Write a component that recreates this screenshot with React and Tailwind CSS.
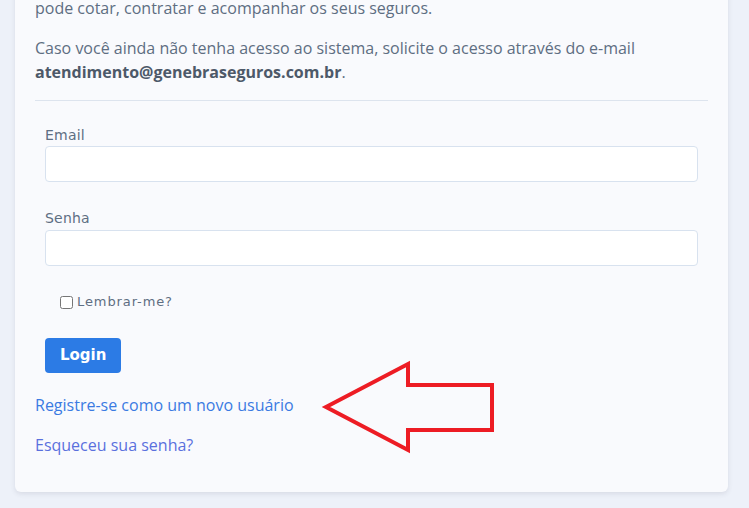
export default function App() {
  return (
    <div className="relative h-[508px] w-[749px] overflow-hidden bg-[#edf1f9]">
      <div className="absolute left-0 right-0 top-[-40px] pl-[15px] pr-[21px]">
        <div
          className="rounded-b-[6px] bg-[#f9fafd] px-[20px] pb-[35px] pt-[36px] shadow-[0_2px_5px_rgba(65,69,88,0.12)]"
          style={{ fontFamily: '"Open Sans", sans-serif' }}
        >
          <p className="mb-4 text-[16px] leading-6 text-[#5e6e82]">
            pode cotar, contratar e acompanhar os seus seguros.
          </p>

          <p className="mb-4 text-[16px] leading-6 text-[#5e6e82]">
            Caso você ainda não tenha acesso ao sistema, solicite o acesso através do e-mail{" "}
            <strong className="font-bold text-[#4d5969]">
              atendimento@genebraseguros.com.br
            </strong>
            .
          </p>

          <hr className="border-t border-[#dde4ee]" />

          <form
            className="px-[10px] pt-[24px]"
            style={{ fontFamily: '"DejaVu Sans", sans-serif' }}
          >
            <div className="mb-[26px]">
              <label className="block text-[14px] leading-[21px] tracking-[0.2px] text-[#5e6e82]">
                Email
              </label>
              <input
                type="email"
                className="block h-[36px] w-full rounded-[4px] border border-[#d8e2ef] bg-white"
              />
            </div>

            <div className="mb-[26px]">
              <label className="block text-[14px] leading-[21px] tracking-[0.2px] text-[#5e6e82]">
                Senha
              </label>
              <input
                type="password"
                className="mt-[1px] block h-[36px] w-full rounded-[4px] border border-[#d8e2ef] bg-white"
              />
            </div>

            <div className="flex items-center pl-[15px]">
              <input type="checkbox" className="m-0 h-[13px] w-[13px]" />
              <span className="ml-[4px] text-[13px] leading-[20px] tracking-[0.9px] text-[#5e6e82]">
                Lembrar-me?
              </span>
            </div>

            <button
              type="button"
              className="mt-[26px] h-[35px] rounded-[4px] bg-[#2c7be5] px-[15px] text-[15px] font-bold text-white"
            >
              Login
            </button>
          </form>

          <div className="mt-[20px] text-[16px] leading-6">
            <a href="#" className="block text-[#3b7ae2]">
              Registre-se como um novo usuário
            </a>
            <a href="#" className="mt-[16px] block text-[#5a70dd]">
              Esqueceu sua senha?
            </a>
          </div>
        </div>
      </div>

      <svg
        className="pointer-events-none absolute left-0 top-0"
        width="749"
        height="508"
      >
        <polygon
          points="326,407 408,364 408,385 492,385 492,430 408,430 408,450"
          fill="none"
          stroke="#ed1c24"
          strokeWidth="4"
        />
      </svg>
    </div>
  );
}
